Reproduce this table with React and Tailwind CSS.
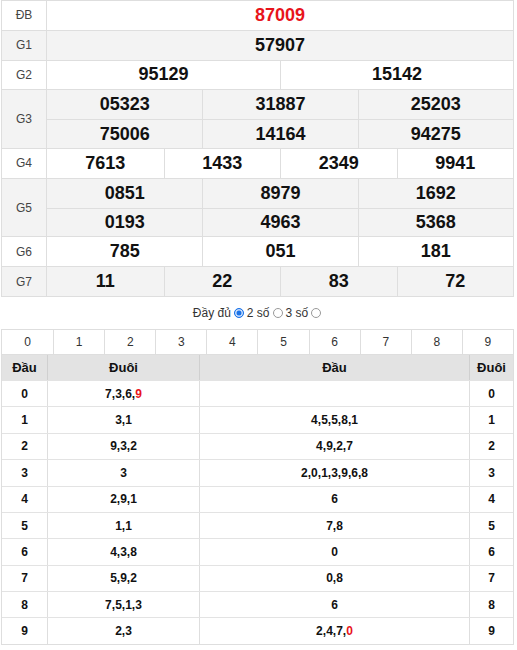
import React from 'react';

const FONT = { fontFamily: '"Liberation Sans", Arial, sans-serif' };

const PRIZES = [
  { label: 'ĐB', rows: [['87009']], red: true, bg: 'bg-white' },
  { label: 'G1', rows: [['57907']], bg: 'bg-[#f3f3f3]' },
  { label: 'G2', rows: [['95129', '15142']], bg: 'bg-white' },
  { label: 'G3', rows: [['05323', '31887', '25203'], ['75006', '14164', '94275']], bg: 'bg-[#f3f3f3]' },
  { label: 'G4', rows: [['7613', '1433', '2349', '9941']], bg: 'bg-white' },
  { label: 'G5', rows: [['0851', '8979', '1692'], ['0193', '4963', '5368']], bg: 'bg-[#f3f3f3]' },
  { label: 'G6', rows: [['785', '051', '181']], bg: 'bg-white' },
  { label: 'G7', rows: [['11', '22', '83', '72']], bg: 'bg-[#f3f3f3]' },
];

// [đầu, đuôi list, red index in đuôi, đầu list (by tail), red index]
const LOTO = [
  ['0', '7,3,6,9', 3, '', -1],
  ['1', '3,1', -1, '4,5,5,8,1', -1],
  ['2', '9,3,2', -1, '4,9,2,7', -1],
  ['3', '3', -1, '2,0,1,3,9,6,8', -1],
  ['4', '2,9,1', -1, '6', -1],
  ['5', '1,1', -1, '7,8', -1],
  ['6', '4,3,8', -1, '0', -1],
  ['7', '5,9,2', -1, '0,8', -1],
  ['8', '7,5,1,3', -1, '6', -1],
  ['9', '2,3', -1, '2,4,7,0', 3],
];

function Digits({ text, red }) {
  if (!text) return null;
  const parts = text.split(',');
  return parts.map((d, i) => (
    <React.Fragment key={i}>
      <span className={i === red ? 'text-[#e8141b]' : ''}>{d}</span>
      {i < parts.length - 1 ? ',' : ''}
    </React.Fragment>
  ));
}

function PrizeRow({ prize }) {
  const cols = prize.rows[0].length;
  const grid = cols === 1 ? 'grid-cols-1' : cols === 2 ? 'grid-cols-2' : cols === 3 ? 'grid-cols-3' : 'grid-cols-4';
  return (
    <div className={`flex border-b border-[#dedede] ${prize.bg}`}>
      <div className="w-[45px] shrink-0 flex items-center justify-center border-r border-[#dedede] text-[12px] text-[#444]">
        {prize.label}
      </div>
      <div className="flex-1 flex flex-col">
        {prize.rows.map((row, ri) => (
          <div key={ri} className={`grid ${grid} h-[28.8px] ${ri > 0 ? 'border-t border-[#dedede]' : ''}`}>
            {row.map((n, ci) => (
              <div
                key={ci}
                className={`flex items-center justify-center text-[18px] font-bold ${ci > 0 ? 'border-l border-[#dedede]' : ''} ${prize.red ? 'text-[#e8141b]' : 'text-[#111]'}`}
              >
                {n}
              </div>
            ))}
          </div>
        ))}
      </div>
    </div>
  );
}

function Radio({ checked }) {
  return (
    <span className={`inline-block w-[10px] h-[10px] rounded-full border align-[-1px] mx-[3px] ${checked ? 'border-[#1a73e8] bg-[#1a73e8] shadow-[inset_0_0_0_1.5px_#cfe1fb]' : 'border-[#999] bg-white'}`} />
  );
}

export default function App() {
  return (
    <div className="w-[517px] h-[650px] bg-white" style={FONT}>
      <div className="ml-[1px] w-[513px] border-t border-l border-r border-[#dedede]">
        {PRIZES.map((p) => (
          <PrizeRow key={p.label} prize={p} />
        ))}
      </div>

      <div className="h-[32px] flex items-center justify-center text-[12px] text-[#333]">
        Đầy đủ <Radio checked /> 2 số <Radio /> 3 số <Radio />
      </div>

      <div className="ml-[1px] w-[513px] border border-[#dedede]">
        <div className="grid grid-cols-10 h-[24px] bg-white">
          {['0', '1', '2', '3', '4', '5', '6', '7', '8', '9'].map((d, i) => (
            <div key={d} className={`flex items-center justify-center text-[12px] text-[#333] ${i > 0 ? 'border-l border-[#dedede]' : ''}`}>
              {d}
            </div>
          ))}
        </div>
        <div className="flex h-[26px] bg-[#e3e3e3] border-t border-[#dedede] text-[13px] font-bold text-[#111]">
          <div className="w-[45px] flex items-center justify-center">Đầu</div>
          <div className="w-[152px] flex items-center justify-center border-l border-[#d0d0d0]">Đuôi</div>
          <div className="flex-1 flex items-center justify-center border-l border-[#d0d0d0]">Đầu</div>
          <div className="w-[44px] flex items-center justify-center border-l border-[#d0d0d0]">Đuôi</div>
        </div>
        {LOTO.map(([d, tails, tr, heads, hr]) => (
          <div key={d} className="flex h-[26.4px] border-t border-[#e3e3e3] text-[12px] font-bold text-[#111]">
            <div className="w-[45px] flex items-center justify-center">{d}</div>
            <div className="w-[152px] flex items-center justify-center border-l border-[#dedede]">
              <Digits text={tails} red={tr} />
            </div>
            <div className="flex-1 flex items-center justify-center border-l border-[#dedede]">
              <Digits text={heads} red={hr} />
            </div>
            <div className="w-[44px] flex items-center justify-center border-l border-[#dedede]">{d}</div>
          </div>
        ))}
      </div>
    </div>
  );
}
